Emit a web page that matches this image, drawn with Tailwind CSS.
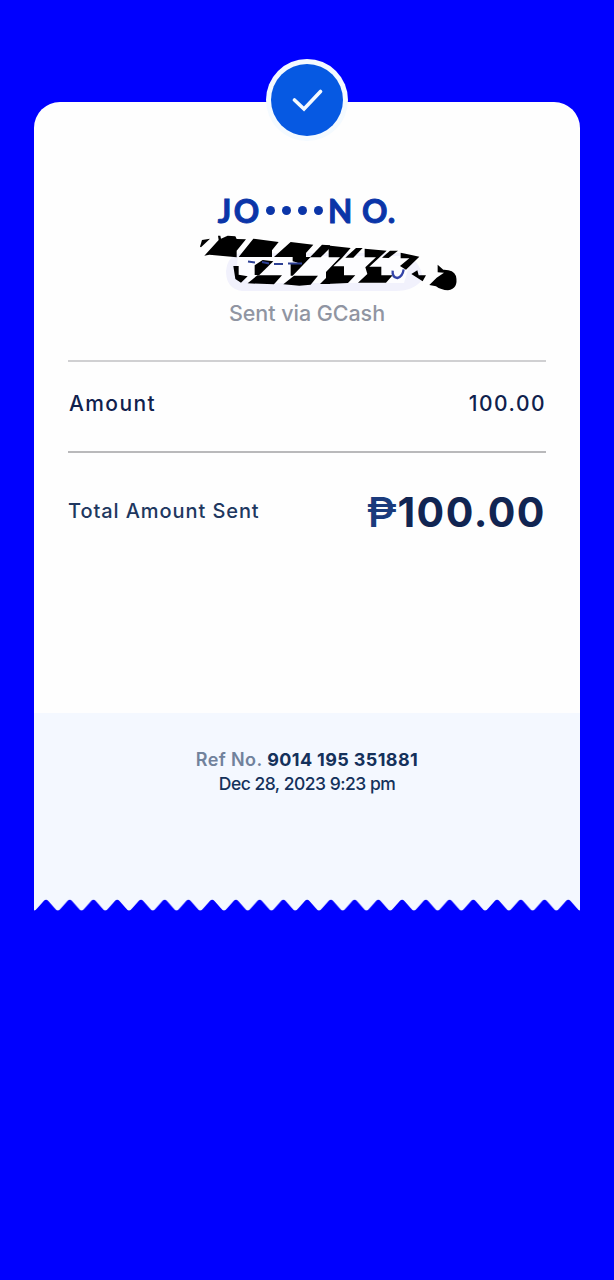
<!DOCTYPE html>
<html lang="en">
<head>
<meta charset="utf-8">
<title>Receipt</title>
<script src="https://cdn.jsdelivr.net/npm/@tailwindcss/browser@4"></script>
</head>
<body class="min-h-screen bg-[#0000ff] font-['Inter','Noto_Sans',sans-serif]">
<main class="mx-[34px] pt-[102px] w-[546px]">
  <section class="relative h-[611px] rounded-t-[26px] bg-[#fefefe] px-[34px]">
    <div class="absolute -top-[43px] left-[232px] flex size-[82px] items-center justify-center rounded-full bg-[#f4faff]">
      <div class="flex size-[72px] items-center justify-center rounded-full bg-[#0659e2]">
        <svg class="h-[24px] w-[32px]" viewBox="0 0 32 24" fill="none" stroke="#f4faff" stroke-width="3.6" stroke-linecap="round" stroke-linejoin="miter"><path d="M3.500 12 L13 21 L29.500 3.500"/></svg>
      </div>
    </div>
    <header class="flex flex-col items-center pt-[89px]">
      <h1 class="flex h-[39px] items-center text-[31.5px] font-bold leading-[38px] text-[#0b35a8] font-['Lato',sans-serif] [-webkit-text-stroke:1px_#0b35a8]">
        <span class="tracking-[2.6px]">JO</span><span class="ml-[4px] mr-[5px] flex gap-[6.3px]"><i class="size-[9.6px] rounded-full bg-[#0b35a8]"></i><i class="size-[9.6px] rounded-full bg-[#0b35a8]"></i><i class="size-[9.6px] rounded-full bg-[#0b35a8]"></i><i class="size-[9.6px] rounded-full bg-[#0b35a8]"></i></span><span class="tracking-[1px]">N O.</span>
      </h1>
      <svg class="h-[65px] w-[310px]" viewBox="152 230 310 65" aria-hidden="true">
        <path d="M240 253 H405 Q421 262 423 279 Q414 291 396 291 H242 Q226 289 226 271 Q227 257 240 253Z" fill="#f1f1fc"/>
        <path d="M238 256 H412 L404 283 H250 L236 274Z" fill="#fdfdff"/>
        <g transform="translate(196 230) scale(.3333)">
          <path d="M12 50 L18 30 L42 26 L15 52Z"/>
          <path d="M25 77 L68 30 L66 17 L73 17 L75 26 L95 17 L118 19 L122 27 L150 28 L122 62 V82 L40 74Z"/>
          <path d="M128 81 L172 26 L248 36 L228 61 V81Z"/>
          <path d="M112 108 H128 V134 L155 139 L135 158 L118 147Z"/>
          <path d="M176 106 L200 90 L232 94 L190 135 H176Z"/>
          <path d="M155 160 L184 136 H258 L234 163Z"/>
          <path d="M234 81 L284 36 L352 44 L330 69 V81 H344 L290 137 H284 V102 L306 98 L290 94 V81Z"/>
          <path d="M262 163 L294 137 H366 L344 164 L310 167Z"/>
          <path d="M342 82 L378 44 L402 46 V54 L374 82Z"/>
          <path d="M372 162 L402 132 V162Z"/>
        </g>
        <g transform="translate(326 230) scale(.3333)">
          <path d="M0 46 L74 54 L48 84 L22 109 H54 V136 H88 L66 159 L0 162 V126 L42 82 H8 V56 L0 55Z"/>
          <path d="M58 83 L90 54 H110 L82 83Z"/>
          <path d="M116 56 L182 62 L156 86 L130 110 H166 V136 H200 L180 158 H96 L124 132 L118 112 L150 82 H116Z"/>
          <path d="M168 83 L192 62 H216 L188 84Z"/>
          <path d="M224 68 L280 80 L240 119 L222 108 L250 85 H224Z"/>
          <path d="M256 132 L274 121 L278 136 H300 L290 154Z"/>
          <path d="M310 165 L332 143 L354 128 L335 127 V104 L352 119 Q382 118 390 138 Q398 176 366 181 Q345 180 330 169Z"/>
          <path d="M200 122 Q198 142 214 144 Q230 140 233 118" fill="none" stroke="#3444a8" stroke-width="7"/>
        </g>
        <path d="M248 261.500 L255 262.500 M262 262 L269 263.500 M274 264 H283 M288 263.500 H302" stroke="#2c3f94" stroke-width="1.800"/>
      </svg>
      <p class="mt-[4px] h-[28px] text-[21.5px] font-medium leading-[28px] text-[#9095a2] tracking-[-0.05px]">Sent via GCash</p>
    </header>
    <hr class="mt-[33px] border-t-2 border-[#d0d0d2]">
    <div class="flex h-[89px] items-center justify-between pb-[6px] text-[21px] font-medium text-[#10214d]">
      <span class="pl-px tracking-[1.4px]">Amount</span><span class="tracking-[1.5px]">100.00</span>
    </div>
    <hr class="border-t-2 border-[#b9b9bb]">
    <div class="flex h-[118px] items-center justify-between text-[#112552]">
      <span class="pb-[2px] text-[20px] font-medium tracking-[0.92px] text-[#20375f]">Total Amount Sent</span>
      <strong class="flex items-center text-[41px] font-bold leading-none"><span class="inline-block origin-right scale-x-110 font-medium text-[#1b3b7c]">₱</span><span class="tracking-[1.5px]">100.00</span></strong>
    </div>
  </section>
  <footer>
    <div class="flex h-[185px] flex-col items-center bg-[#f4f8ff] pt-[35px] text-[18px] leading-[24px] text-[#14315b]">
      <p class="font-bold tracking-[0.38px]"><span class="font-semibold text-[#71829c]">Ref No.</span> 9014 195 351881</p>
      <p class="text-[17.5px] font-medium tracking-[-0.5px]">Dec 28, 2023 9:23 pm</p>
    </div>
    <svg class="block h-[13px] w-[546px]" viewBox="0 0 546 13" aria-hidden="true">
      <defs><pattern id="teeth" width="23.740" height="13" patternUnits="userSpaceOnUse"><path d="M0 0 H23.740 V12.500 Q22.500 12.500 20.500 10 L14.300 3 Q12 .3 9.700 3 L3.500 10 Q1.500 12.500 0 12.500Z" fill="#f4f8ff"/></pattern></defs>
      <rect width="546" height="13" fill="url(#teeth)"/>
    </svg>
  </footer>
</main>
</body>
</html>
